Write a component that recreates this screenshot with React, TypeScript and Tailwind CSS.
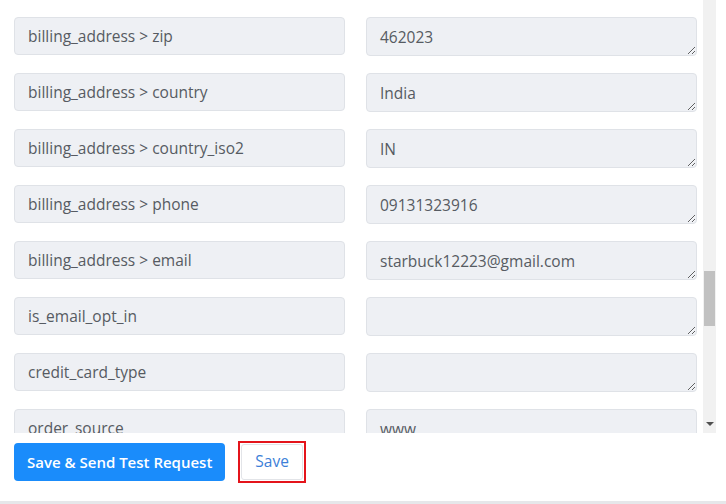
import React from "react";

const rows: [string, string][] = [
  ["billing_address > state", "Madhya Pradesh"],
  ["billing_address > zip", "462023"],
  ["billing_address > country", "India"],
  ["billing_address > country_iso2", "IN"],
  ["billing_address > phone", "09131323916"],
  ["billing_address > email", "starbuck12223@gmail.com"],
  ["is_email_opt_in", ""],
  ["credit_card_type", ""],
  ["order_source", "www"],
];

export default function App() {
  return (
    <div
      className="w-[726px] h-[504px] bg-white flex flex-col overflow-hidden"
      style={{ fontFamily: "'Open Sans', 'Noto Sans', sans-serif" }}
    >
      <div className="h-[433px] flex">
        <div className="w-[703px] overflow-hidden pl-[14px] pr-[6px]">
          <div className="-mt-[39px] grid grid-cols-2 items-start gap-x-[21px] gap-y-[17px]">
            {rows.map(([k, v]) => (
              <React.Fragment key={k}>
                <div className="h-[38px] rounded-[4px] border border-[#dfe2e7] bg-[#eef0f4] px-[13px] pt-[2px] flex items-center text-[15.5px] text-[#565b62]">
                  {k}
                </div>
                <textarea
                  readOnly
                  value={v}
                  className="h-[39px] block w-full rounded-[4px] border border-[#dfe2e7] bg-[#eef0f4] px-[13px] pt-[8px] text-[15.5px] leading-[22px] text-[#565b62] resize-y outline-none overflow-hidden"
                />
              </React.Fragment>
            ))}
          </div>
        </div>
        <div className="w-[13px] bg-[#f1f1f1] relative">
          <div className="absolute left-[1px] right-[1px] top-[271px] h-[55px] bg-[#c1c1c1]" />
          <div className="absolute left-[3px] top-[422px] w-0 h-0 border-l-[4px] border-r-[4px] border-t-[4px] border-l-transparent border-r-transparent border-t-[#505050]" />
        </div>
        <div className="w-[10px]" />
      </div>
      <div className="h-[68px] flex items-start pt-[8px] gap-[13px] pl-[14px]">
        <button className="mt-[2px] h-[38px] px-[13px] rounded-[4px] bg-[#1a8cfb] text-white text-[15px] font-semibold">
          Save &amp; Send Test Request
        </button>
        <div className="border-2 border-[#e4141b] p-[1px]">
          <button className="h-[36px] px-[13px] rounded-[3px] border border-[#e2e4e8] bg-white text-[15.5px] text-[#3d7fd8]">
            Save
          </button>
        </div>
      </div>
      <div className="h-[3px] bg-[#e6e7ea]" />
    </div>
  );
}
